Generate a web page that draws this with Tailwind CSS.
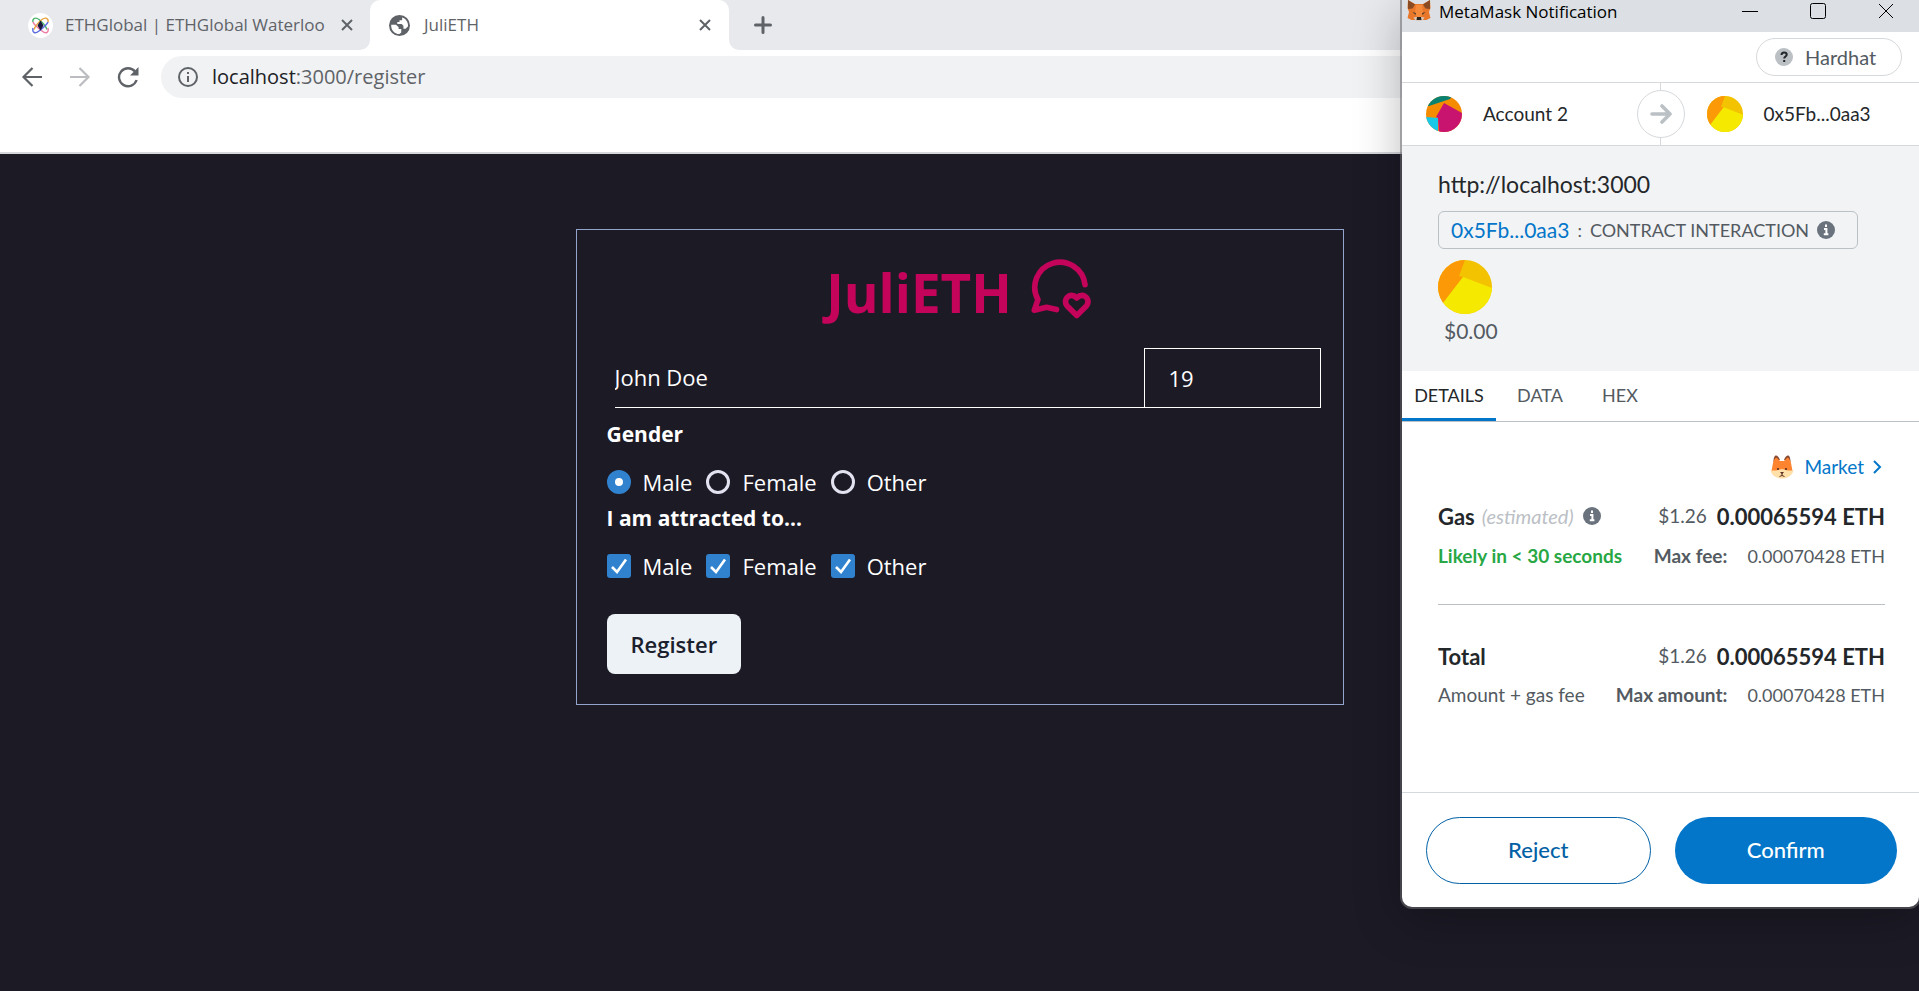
<!DOCTYPE html>
<html lang="en">
<head>
<meta charset="utf-8">
<title>JuliETH</title>
<script src="https://cdn.jsdelivr.net/npm/@tailwindcss/browser@4"></script>
</head>
<body class="relative flex min-h-screen flex-col overflow-hidden bg-[#1c1a25] font-['Open_Sans',sans-serif]">

<svg class="absolute size-0" aria-hidden="true">
  <defs>
    <symbol id="close" viewBox="0 0 12 12"><path d="M1 1l10 10M11 1L1 11" stroke="currentColor" stroke-width="2" fill="none"/></symbol>
    <symbol id="info" viewBox="0 0 18 18"><circle cx="9" cy="9" r="9" fill="#6a737d"/><path d="M9 3.6v2.4M7 8h2.4v5M6.8 13.2h4.6" stroke="#fff" stroke-width="2" fill="none"/></symbol>
    <symbol id="contract" viewBox="0 0 54 54"><clipPath id="cc"><circle cx="27" cy="27" r="27"/></clipPath><g clip-path="url(#cc)"><path fill="#f3c200" d="M0 0h54v54H0z"/><path fill="#fb9a06" d="M0 0h27l-6 16 4 1L0 50z"/><path fill="#f5e900" d="M25 17l29 11v26H0l5-11z"/></g></symbol>
  </defs>
</svg>

<header class="bg-white">
  <div class="flex h-[50px]">
    <div class="flex w-[370px] shrink-0 items-center rounded-br-[10px] bg-[#e7e9ed] pl-7 text-[#5f6368]">
      <svg class="mr-3 size-[25px] shrink-0" viewBox="0 0 25 25" fill="none" stroke-width="1.4"><circle cx="12.500" cy="12.500" r="12.500" fill="#fff"/><path d="M5 9C4 5 8 4 11 6.500s7 7 8 10" stroke="#48b36b"/><path d="M20 15c1 5-2 6-6 3S6 12 5 9" stroke="#ef7ba5"/><path d="M20 9c1-4-3-5-6-2.500s-7 7-8 10" stroke="#e8a13a"/><path d="M5 15c-1 5 2 6 6 3s8-6 9-9" stroke="#5b6be0"/><path d="M12.500 7.500l3 5-3 5-3-5z" fill="#1a1a40"/></svg>
      <span class="mr-5 w-[256px] whitespace-nowrap text-[17px]">ETHGlobal | ETHGlobal Waterloo</span>
      <button aria-label="Close tab"><svg class="size-3"><use href="#close"/></svg></button>
    </div>
    <div class="w-[359px] shrink-0 bg-[#e7e9ed]">
      <div class="flex h-full items-center rounded-t-[10px] bg-white pr-[18px] pl-[19px] text-[#5f6368]">
        <svg class="mr-[14px] size-[21px]" viewBox="0 0 24 24"><circle cx="12" cy="12" r="12" fill="#5f6368"/><path fill="#fff" d="M2.500 11l5.500 0 3 3v2h3v4l-2 1.800C6 21.500 2.200 17 2.500 11zM15 2.800c4.500 1.500 7 5.500 6.800 10l-2.800 3h-2.500v-3.500l-2-2H9.500V8H12V6h3z"/></svg>
        <span class="grow text-[17px]">JuliETH</span>
        <button aria-label="Close tab"><svg class="size-3"><use href="#close"/></svg></button>
      </div>
    </div>
    <div class="flex grow items-center rounded-bl-[10px] bg-[#e7e9ed] pl-6">
      <button aria-label="New tab"><svg class="size-[20px]" viewBox="0 0 20 20" stroke="#5f6368" stroke-width="3" stroke-linecap="round"><path d="M2.500 10h15M10 2.500v15"/></svg></button>
    </div>
  </div>
  <div class="flex h-[54px] items-center pl-[21px]">
    <button class="mr-[26px]" aria-label="Back"><svg class="size-[22px]" viewBox="0 0 22 22" fill="none" stroke="#5f6368" stroke-width="2.200"><path d="M21 11H3M11.500 2L2.500 11l9 9"/></svg></button>
    <button class="mr-[26px]" aria-label="Forward"><svg class="size-[22px]" viewBox="0 0 22 22" fill="none" stroke="#bbbdc0" stroke-width="2.200"><path d="M1 11h18M10.500 2l9 9-9 9"/></svg></button>
    <button class="mr-[22px]" aria-label="Reload"><svg class="size-[22px]" viewBox="0 0 22 22" fill="none" stroke="#5f6368" stroke-width="2.400"><path d="M18 5.500A9 9 0 1 0 19.600 14"/><path d="M21.500 1v8.500H13z" fill="#5f6368" stroke="none"/></svg></button>
    <div class="flex h-[42px] grow items-center rounded-l-full bg-[#f0f2f4] pl-[17px]">
      <svg class="mr-[14px] size-[20px]" viewBox="0 0 20 20" fill="none" stroke="#5f6368" stroke-width="2"><circle cx="10" cy="10" r="9"/><path d="M10 5v2M10 9v6"/></svg>
      <div role="textbox" aria-label="Address" contenteditable="true" class="text-[20px] text-[#5f6368]"><span class="text-[#202124]">localhost</span>:3000/register</div>
    </div>
  </div>
  <div class="h-[50px] border-b-2 border-[#d5d7db]"></div>
</header>

<main class="px-6 pt-[75px]">
  <form class="mx-auto max-w-3xl border border-[#94a3cb] px-[30px] pt-6 pb-[30px] text-[22px] text-white">
    <h1 class="flex h-[94px] items-start justify-center gap-[18px] text-[#c4045b]">
      <span class="pt-[6px] text-[53px] leading-[66px] font-bold">JuliETH</span>
      <svg class="mt-[5px] h-[62px] w-[63px]" viewBox="240 110 190 186" fill="none" stroke="currentColor" stroke-width="17" stroke-linecap="round" stroke-linejoin="round"><path d="M406 187A76 76 0 1 0 264 232L253 264L290 255L320 262"/><path d="M381 280L352 251C344 242 346 228 356 222C364 218 374 220 381 227C388 220 398 218 406 222C416 228 418 242 410 251Z"/></svg>
    </h1>
    <div class="-mr-2 ml-2 flex h-[60px]">
      <input aria-label="Name" value="John Doe" class="min-w-0 grow border-b border-white bg-transparent">
      <input aria-label="Age" value="19" class="w-[177px] border border-white bg-transparent px-6">
    </div>
    <fieldset>
      <legend class="mb-[2px] pt-2 text-[21px] leading-9 font-bold">Gender</legend>
      <div class="flex h-12 items-center gap-[14px] pt-2">
        <label class="flex items-center gap-3"><input type="radio" name="gender" checked class="size-6 appearance-none rounded-full border-2 border-[#e2e8f0] checked:border-[8px] checked:border-[#3182ce] checked:bg-white">Male</label>
        <label class="flex items-center gap-3"><input type="radio" name="gender" class="size-6 appearance-none rounded-full border-[3px] border-[#e2e2f0]">Female</label>
        <label class="flex items-center gap-3"><input type="radio" name="gender" class="size-6 appearance-none rounded-full border-[3px] border-[#e2e2f0]">Other</label>
      </div>
    </fieldset>
    <fieldset>
      <legend class="mb-1 text-[21px] leading-8 font-bold">I am attracted to...</legend>
      <div class="flex h-12 items-center gap-[14px] pt-2">
        <label class="flex items-center gap-3"><span class="grid"><input type="checkbox" checked class="col-start-1 row-start-1 size-6 appearance-none rounded-[3px] bg-[#3182ce]"><svg class="pointer-events-none col-start-1 row-start-1 size-6" viewBox="0 0 24 24" fill="none" stroke="#fff" stroke-width="2.600"><path d="M5 13l5 5L19 5.500"/></svg></span>Male</label>
        <label class="flex items-center gap-3"><span class="grid"><input type="checkbox" checked class="col-start-1 row-start-1 size-6 appearance-none rounded-[3px] bg-[#3182ce]"><svg class="pointer-events-none col-start-1 row-start-1 size-6" viewBox="0 0 24 24" fill="none" stroke="#fff" stroke-width="2.600"><path d="M5 13l5 5L19 5.500"/></svg></span>Female</label>
        <label class="flex items-center gap-3"><span class="grid"><input type="checkbox" checked class="col-start-1 row-start-1 size-6 appearance-none rounded-[3px] bg-[#3182ce]"><svg class="pointer-events-none col-start-1 row-start-1 size-6" viewBox="0 0 24 24" fill="none" stroke="#fff" stroke-width="2.600"><path d="M5 13l5 5L19 5.500"/></svg></span>Other</label>
      </div>
    </fieldset>
    <button type="button" class="mt-[28px] block h-[60px] rounded-lg bg-[#edf2f7] px-6 text-[22px] font-semibold text-[#1a202c]">Register</button>
  </form>
</main>

<section aria-label="MetaMask Notification" class="absolute top-0 right-0 w-[517px] overflow-hidden rounded-b-[10px] bg-white font-['Lato',sans-serif] text-[#24272a] shadow-[0_0_0_2px_rgba(110,110,115,0.55),0_12px_48px_rgba(0,0,0,0.28)]">
  <div class="flex h-8 items-center bg-[#dce0e5] pr-[25px] pb-[10px] pl-[5px]">
    <svg class="mr-2 size-6 shrink-0" viewBox="0 0 24 24"><path fill="#e8772a" d="M1 1l7 4h8l7-4 .5 8L22 13l1.500 6-4 2H4.500l-4-2L2 13 .5 9z"/><path fill="#8a4a22" d="M1 1l7 4.500-2.500 4L1 10zM23 1l-7 4.500 2.500 4L23 10z"/><path fill="#f58a3a" d="M9 6h6l1 8-2 4h-4l-2-4z"/><path fill="#54402f" d="M5.500 13l3.500 1-.5 2zM18.500 13L15 14l.5 2z"/><path fill="#d9cdc4" d="M6.500 18.500L10 18h4l3.500.5L15 22H9z"/><path fill="#2a2420" d="M10 18h4l.5 3h-5z"/></svg>
    <span class="grow pt-[2px] font-['Open_Sans',sans-serif] text-[17px] leading-5 text-black">MetaMask Notification</span>
    <button class="mr-[52px]" aria-label="Minimize"><svg class="size-4" viewBox="0 0 16 16" stroke="#000"><path d="M0 8.500h16"/></svg></button>
    <button class="mr-[52px]" aria-label="Maximize"><svg class="size-4" viewBox="0 0 16 16" fill="none" stroke="#000"><rect x=".500" y=".500" width="15" height="15" rx="2"/></svg></button>
    <button aria-label="Close"><svg class="size-4" viewBox="0 0 16 16" stroke="#000"><path d="M1 1l14 14M15 1L1 15"/></svg></button>
  </div>
  <div class="flex h-[51px] items-center justify-end border-b border-[#d6d9dc] pr-[17px]">
    <button class="flex h-[38px] w-[146px] items-center gap-3 rounded-full border border-[#d6d9dc] pl-[18px] text-[20px] text-[#535a61]"><svg class="size-[18px]" viewBox="0 0 18 18"><circle cx="9" cy="9" r="9" fill="#bbc0c5"/><path d="M6.500 7c0-3.500 5.200-3.200 5.200-.300C11.700 8.500 9.200 8.500 9.200 10.500M9.200 12v2" fill="none" stroke="#24272a" stroke-width="2"/></svg>Hardhat</button>
  </div>
  <div class="relative grid h-[63px] grid-cols-2 border-b border-[#d6d9dc] text-[19px]">
    <div class="flex items-center gap-[21px] border-r border-[#d6d9dc] pl-6">
      <svg class="size-9" viewBox="0 0 36 36"><clipPath id="ca"><circle cx="18" cy="18" r="18"/></clipPath><g clip-path="url(#ca)"><path fill="#f58c00" d="M0 0h36v36H0z"/><path fill="#0a8272" d="M0 0h26L24 3 3 10H0z"/><path fill="#18c8e8" d="M0 21l12 1v14H0z"/><path fill="#c8146e" d="M18 7l18 10v19H13L12 22l-2-1z"/></g></svg>
      <span>Account 2</span>
    </div>
    <div class="flex items-center gap-[21px] pl-[46px]">
      <svg class="size-9"><use href="#contract"/></svg>
      <span>0x5Fb...0aa3</span>
    </div>
    <div class="absolute top-[7px] left-1/2 grid size-12 -translate-x-1/2 place-items-center rounded-full border border-[#d6d9dc] bg-white">
      <svg class="size-[22px]" viewBox="0 0 22 22" fill="none" stroke="#bbc0c5" stroke-width="3.600" stroke-linecap="round" stroke-linejoin="round"><path d="M2 11h17M12 3l8 8-8 8"/></svg>
    </div>
  </div>
  <div class="h-[225px] bg-[#f2f3f5] px-9 pt-6">
    <p class="text-[23px] leading-[28px]">http://localhost:3000</p>
    <div class="mt-[13px] flex h-[38px] w-[420px] items-center gap-2 rounded-md border border-[#bbc0c5] pl-3 text-[18px] text-[#535a61]">
      <a href="#" class="text-[21px] text-[#0376c9]">0x5Fb...0aa3</a><span>:</span><span>CONTRACT INTERACTION</span><svg class="size-[18px]"><use href="#info"/></svg>
    </div>
    <svg class="mt-[11px] size-[54px]"><use href="#contract"/></svg>
    <p class="pt-1 pl-[6px] text-[21px] leading-[26px] text-[#535a61]">$0.00</p>
  </div>
  <div role="tablist" class="flex h-[51px] border-b border-[#bbc0c5] text-[18px] text-[#535a61]">
    <button role="tab" aria-selected="true" class="w-[94px] border-b-[3px] border-[#0376c9] pt-[1px] text-[#24272a]">DETAILS</button>
    <button role="tab" class="w-[88px] pb-[2px]">DATA</button>
    <button role="tab" class="w-[72px] pb-[2px]">HEX</button>
  </div>
  <div class="h-[370px] pt-[28px] pr-[34px] pl-9">
    <div class="flex h-[34px] items-center justify-end pr-[3px]">
      <button class="flex items-center text-[19px] text-[#0376c9]"><svg class="mr-[10px] size-6" viewBox="0 0 24 24"><path fill="#8a4a32" d="M3.500 7C3.500 3 4.500.5 6 .5S9 2 10 5zM20.500 7c0-4-1-6.500-2.500-6.500S15 2 14 5z"/><path fill="#ff8430" d="M3 8c1-4 3-6 4-5l3 3h4l3-3c1-1 3 1 4 5l1.500 8h-21z"/><path fill="#ffe0a8" d="M.5 15.500l5.500 0 6-1.500 6 1.500 5.500 0C22 21 17 23.500 12 23.500S2 21 .5 15.500z"/><circle cx="8" cy="14" r="1.100" fill="#5b3020"/><circle cx="16" cy="14" r="1.100" fill="#5b3020"/><path fill="#5b3020" d="M10 17h4l-2 2.500z"/><path fill="none" stroke="#5b3020" d="M12 18.500v2M9.500 21.500l2.500-1 2.500 1"/></svg>Market<svg class="ml-[9px] h-[14px] w-[9px]" viewBox="0 0 9 14" fill="none" stroke="#0376c9" stroke-width="2"><path d="M1 1l6 6-6 6"/></svg></button>
    </div>
    <div class="mt-[15px] flex h-[34px] items-center text-[19px] text-[#535a61]">
      <b class="text-[22px] text-[#24272a]">Gas</b><i class="ml-[7px] text-[20px] text-[#bbc0c5]">(estimated)</i><svg class="ml-[9px] size-[18px]"><use href="#info"/></svg>
      <span class="ml-auto">$1.26</span><b class="ml-[10px] text-[22px] text-[#24272a]">0.00065594 ETH</b>
    </div>
    <div class="mt-[6px] flex h-[34px] items-center text-[19px] text-[#535a61]">
      <b class="text-[#28a745]">Likely in &lt; 30 seconds</b><b class="ml-auto">Max fee:</b><span class="ml-5 text-[18px]">0.00070428 ETH</span>
    </div>
    <hr class="mt-[31px] border-[#bbc0c5]">
    <div class="mt-[34px] flex h-[34px] items-center text-[19px] text-[#535a61]">
      <b class="text-[22px] text-[#24272a]">Total</b><span class="ml-auto">$1.26</span><b class="ml-[10px] text-[22px] text-[#24272a]">0.00065594 ETH</b>
    </div>
    <div class="mt-[5px] flex h-[34px] items-center text-[19px] text-[#535a61]">
      <span>Amount + gas fee</span><b class="ml-auto">Max amount:</b><span class="ml-5 text-[18px]">0.00070428 ETH</span>
    </div>
  </div>
  <div class="flex gap-6 border-t border-[#d6d9dc] pt-6 pr-[22px] pb-[23px] pl-6 text-[22px]">
    <button class="h-[67px] flex-1 rounded-full border border-[#0260a4] pb-[2px] font-medium text-[#0260a4]">Reject</button>
    <button class="h-[67px] flex-1 rounded-full bg-[#0376c9] pb-[2px] font-medium text-white">Confirm</button>
  </div>
</section>
</body>
</html>
